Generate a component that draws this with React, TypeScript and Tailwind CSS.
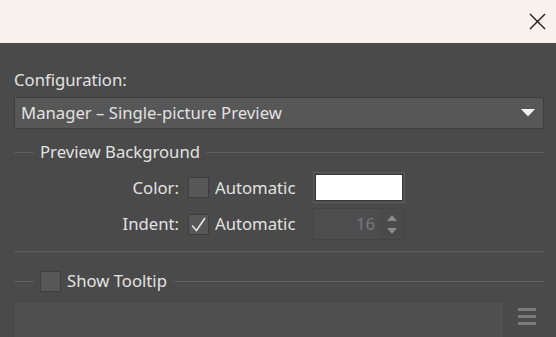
// Preview settings dialog
const font = "font-['Noto_Sans',_'Open_Sans',_sans-serif]";

function Checkbox({ checked = false }: { checked?: boolean }) {
  return (
    <div className="w-[21px] h-[21px] bg-[#575757] border border-[#3d3d3d] flex items-center justify-center">
      {checked && (
        <svg width="17" height="17" viewBox="0 0 17 17" fill="none">
          <path d="M2 9.5 L6.5 14.5 L15 2" stroke="#e6e6e6" strokeWidth="1.6" />
        </svg>
      )}
    </div>
  );
}

function GroupLine({ children }: { children: React.ReactNode }) {
  return (
    <div className="flex items-center h-[22px]">
      <div className="w-[20px] h-px bg-[#5f5f5f]" />
      <div className="px-[6px] flex items-center gap-[6px]">{children}</div>
      <div className="flex-1 h-px bg-[#5f5f5f]" />
    </div>
  );
}

export default function App() {
  return (
    <div className={`w-[556px] h-[337px] overflow-hidden bg-[#4a4a4a] ${font} text-[16.7px] text-[#e2e2e2]`}>
      {/* title bar */}
      <div className="h-[43px] bg-[#f9f1ec] flex items-center justify-end pr-[10px]">
        <svg width="17" height="17" viewBox="0 0 17 17" fill="none">
          <path d="M1 1 L16 16 M16 1 L1 16" stroke="#1a1a1a" strokeWidth="1.4" />
        </svg>
      </div>

      <div className="pl-[14px] pr-[12px] pt-[26px] flex flex-col">
        <div className="leading-[22px] h-[22px] mb-[6px]">Configuration:</div>

        {/* dropdown */}
        <div className="h-[32px] bg-[#575757] border border-[#3d3d3d] flex items-center justify-between pl-[6px] pr-[8px]">
          <span className="leading-[22px]">Manager – Single-picture Preview</span>
          <svg width="14" height="8" viewBox="0 0 14 8">
            <path d="M0 0 H14 L7 7.5 Z" fill="#f0f0f0" />
          </svg>
        </div>

        <div className="mt-[12px]">
          <GroupLine>
            <span className="leading-[22px]">Preview Background</span>
          </GroupLine>
        </div>

        {/* color row */}
        <div className="mt-[9px] flex items-center h-[31px]">
          <div className="w-[165px] text-right">Color:</div>
          <div className="ml-[9px]">
            <Checkbox />
          </div>
          <div className="ml-[6px] w-[98px]">Automatic</div>
          <div className="w-[92px] h-[31px] border border-[#5d5d5d] p-px">
            <div className="w-full h-full bg-white border border-[#3a3a3a]" />
          </div>
        </div>

        {/* indent row */}
        <div className="mt-[5px] flex items-center h-[32px]">
          <div className="w-[165px] text-right">Indent:</div>
          <div className="ml-[9px]">
            <Checkbox checked />
          </div>
          <div className="ml-[6px] w-[98px]">Automatic</div>
          <div className="w-[92px] h-[32px] border border-[#444444] flex">
            <div className="flex-1 bg-[#4d4d4d] text-[#777777] text-right pr-[4px] leading-[30px]">16</div>
            <div className="w-[25px] flex flex-col items-center justify-center gap-[7px]">
              <svg width="10" height="6" viewBox="0 0 10 6">
                <path d="M0 6 H10 L5 0 Z" fill="#8a8a8a" />
              </svg>
              <svg width="10" height="6" viewBox="0 0 10 6">
                <path d="M0 0 H10 L5 6 Z" fill="#8a8a8a" />
              </svg>
            </div>
          </div>
        </div>

        <div className="mt-[11px] h-px bg-[#5f5f5f]" />

        <div className="mt-[18px]">
          <GroupLine>
            <Checkbox />
            <span className="leading-[22px]">Show Tooltip</span>
          </GroupLine>
        </div>

        {/* tooltip text area */}
        <div className="mt-[9px] flex items-start">
          <div className="w-[490px] h-[40px] bg-[#505050] border border-[#464646]" />
          <div className="ml-[14px] mt-[7px] flex flex-col gap-[4px]">
            <div className="w-[18px] h-[3px] bg-[#7a7a7a]" />
            <div className="w-[18px] h-[3px] bg-[#7a7a7a]" />
            <div className="w-[18px] h-[3px] bg-[#7a7a7a]" />
          </div>
        </div>
      </div>
    </div>
  );
}
